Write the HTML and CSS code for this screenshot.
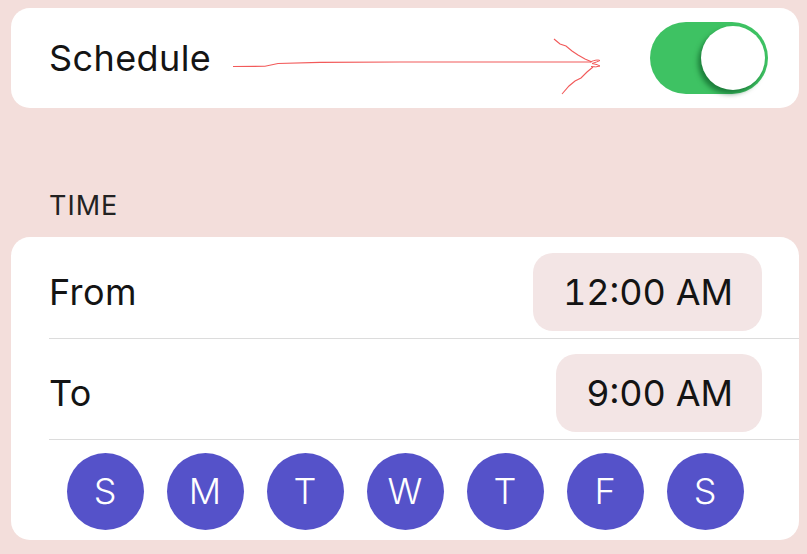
FILE: index.html
```html
<!DOCTYPE html>
<html lang="en">
<head>
<meta charset="utf-8">
<title>Schedule</title>
<link rel="stylesheet" href="styles.css">
</head>
<body>
<div class="page">
  <section class="card card-toggle">
    <span class="label">Schedule</span>
    <div class="switch"><span class="knob"></span></div>
  </section>

  <h2 class="section-title">TIME</h2>

  <section class="card card-time">
    <div class="row">
      <span class="label">From</span>
      <span class="pill">12:00 AM</span>
    </div>
    <div class="row">
      <span class="label">To</span>
      <span class="pill">9:00 AM</span>
    </div>
    <div class="days">
      <span class="day">S</span>
      <span class="day">M</span>
      <span class="day">T</span>
      <span class="day">W</span>
      <span class="day">T</span>
      <span class="day">F</span>
      <span class="day">S</span>
    </div>
  </section>

  <svg class="annot" width="807" height="130" viewBox="0 0 807 130" aria-hidden="true">
    <path d="M233 66.5 L265 66.3 L278 63.5 L320 62.4 L400 62 L591 62" fill="none" stroke="#f25a5a" stroke-width="1.1"/>
    <path d="M554 39 L560 44 L566 46 L572 51 L578 55 L585 59 L592 62" fill="none" stroke="#f25a5a" stroke-width="1.1"/>
    <path d="M562 94 L569 86 L575 81 L581 78 L587 72 L593 67" fill="none" stroke="#f25a5a" stroke-width="1.1"/>
    <path d="M590 62 Q597 59 600 60.5 Q597 62 592 63.5 Q598 64.5 600 66 Q596 67.5 591 66.5" fill="none" stroke="#f25a5a" stroke-width="1"/>
  </svg>
</div>
</body>
</html>
```

FILE: styles.css
```css
* {
  box-sizing: border-box;
}

html, body {
  margin: 0;
  padding: 0;
  background: #f3dedb;
}

body {
  font-family: Inter, "Liberation Sans", sans-serif;
  color: #141414;
}

.page {
  position: relative;
  width: 807px;
  height: 554px;
  padding: 8px 8px 0 11px;
  display: flex;
  flex-direction: column;
}

.card {
  background: #ffffff;
  border-radius: 19px;
}

.label {
  font-size: 36px;
  line-height: 44px;
  font-weight: 400;
  letter-spacing: 0.4px;
}

.card-toggle {
  height: 100px;
  padding: 0 31px 0 38px;
  display: flex;
  align-items: center;
  justify-content: space-between;
}

.switch {
  width: 118px;
  height: 72px;
  border-radius: 36px;
  background: #3ec263;
  display: flex;
  justify-content: flex-end;
  align-items: center;
  padding: 0 3px 0 0;
}

.knob {
  width: 64px;
  height: 64px;
  border-radius: 50%;
  background: #ffffff;
  box-shadow: -3px 4px 5px rgba(0, 70, 25, 0.55);
}

.section-title {
  margin: 82px 0 15px 38px;
  font-size: 27px;
  line-height: 32px;
  font-weight: 400;
  color: #222222;
  letter-spacing: 1px;
}

.card-time {
  height: 303px;
  display: flex;
  flex-direction: column;
}

.row {
  margin-left: 38px;
  padding: 16px 37px 7px 0;
  border-bottom: 1px solid #dcdcdc;
  display: flex;
  align-items: center;
  justify-content: space-between;
}

.row + .row {
  padding-top: 15px;
}

.pill {
  height: 78px;
  padding: 0 29px 0 30px;
  border-radius: 20px;
  background: #f3e5e5;
  font-size: 36px;
  display: flex;
  align-items: center;
  letter-spacing: 0;
  font-variant-numeric: tabular-nums;
}

.days {
  flex: 1;
  display: flex;
  justify-content: center;
  align-items: center;
  gap: 23px;
  padding-top: 2px;
}

.day {
  width: 77px;
  height: 77px;
  border-radius: 50%;
  background: #5552c9;
  color: #ffffff;
  font-size: 36px;
  font-weight: 300;
  display: flex;
  align-items: center;
  justify-content: center;
}

.annot {
  position: absolute;
  left: 0;
  top: 0;
  pointer-events: none;
}
```
